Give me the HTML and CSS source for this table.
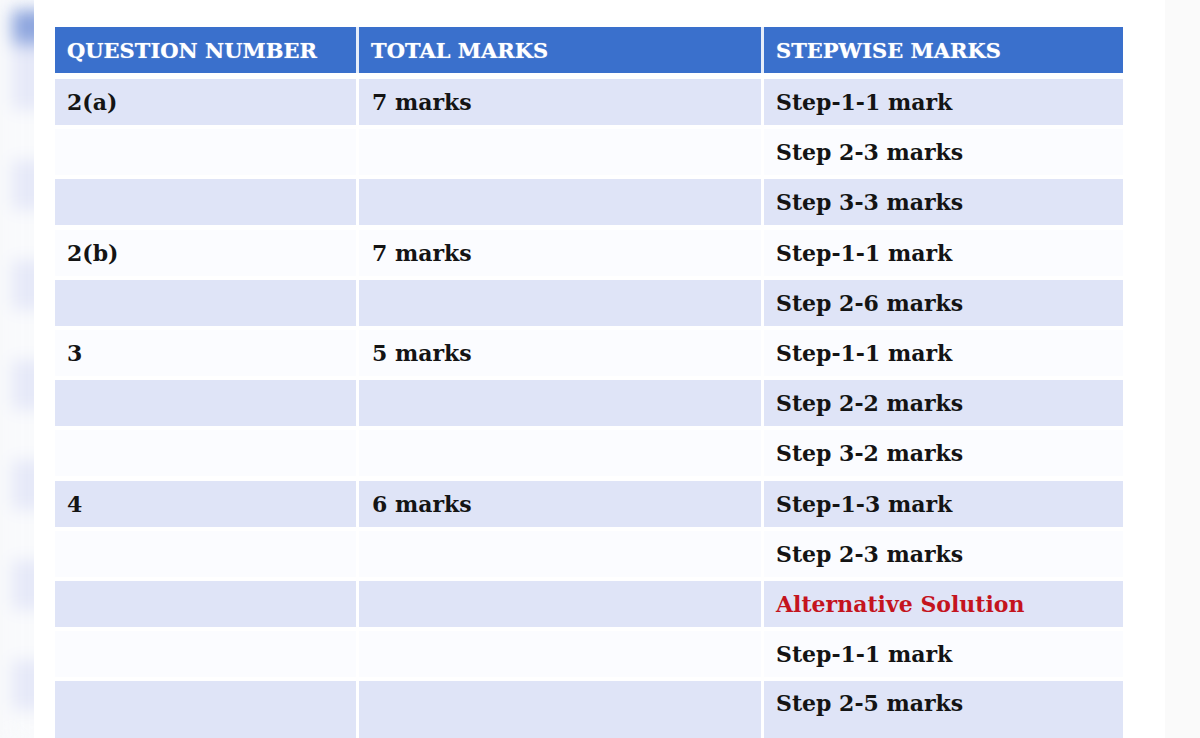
FILE: index.html
```html
<!DOCTYPE html>
<html lang="en">
<head>
<meta charset="utf-8">
<title>Stepwise Marks</title>
<link rel="stylesheet" href="styles.css">
</head>
<body>
<div class="screen">
  <div class="side"><div class="side-blur"></div></div>
  <div class="panel">
    <div class="marks">
      <div class="head">
        <div class="hcell">QUESTION NUMBER</div>
        <div class="hcell">TOTAL MARKS</div>
        <div class="hcell">STEPWISE MARKS</div>
      </div>
      <div class="body">
        <div class="row shade"><div class="cell">2(a)</div><div class="cell">7 marks</div><div class="cell">Step-1-1 mark</div></div>
        <div class="row"><div class="cell"></div><div class="cell"></div><div class="cell">Step 2-3 marks</div></div>
        <div class="row shade"><div class="cell"></div><div class="cell"></div><div class="cell">Step 3-3 marks</div></div>
        <div class="row"><div class="cell">2(b)</div><div class="cell">7 marks</div><div class="cell">Step-1-1 mark</div></div>
        <div class="row shade"><div class="cell"></div><div class="cell"></div><div class="cell">Step 2-6 marks</div></div>
        <div class="row"><div class="cell">3</div><div class="cell">5 marks</div><div class="cell">Step-1-1 mark</div></div>
        <div class="row shade"><div class="cell"></div><div class="cell"></div><div class="cell">Step 2-2 marks</div></div>
        <div class="row"><div class="cell"></div><div class="cell"></div><div class="cell">Step 3-2 marks</div></div>
        <div class="row shade"><div class="cell">4</div><div class="cell">6 marks</div><div class="cell">Step-1-3 mark</div></div>
        <div class="row"><div class="cell"></div><div class="cell"></div><div class="cell">Step 2-3 marks</div></div>
        <div class="row shade"><div class="cell"></div><div class="cell"></div><div class="cell alt">Alternative Solution</div></div>
        <div class="row"><div class="cell"></div><div class="cell"></div><div class="cell">Step-1-1 mark</div></div>
        <div class="row shade last"><div class="cell"></div><div class="cell"></div><div class="cell">Step 2-5 marks</div></div>
      </div>
    </div>
  </div>
  <div class="edge"></div>
</div>
</body>
</html>
```
FILE: styles.css
```css
html, body {
  margin: 0;
  padding: 0;
  background: #ffffff;
}

.screen {
  display: flex;
  width: 1200px;
  height: 738px;
  overflow: hidden;
}

.side {
  width: 34px;
  flex: none;
  background: #f9fafc;
  overflow: hidden;
}

.side-blur {
  width: 40px;
  height: 100%;
  margin-left: 12px;
  background:
    linear-gradient(180deg, #8ea6de 0px, #8ea6de 28px, transparent 40px),
    repeating-linear-gradient(180deg, #e6e9f8 0px, #e6e9f8 50px, #f9fafc 50px, #f9fafc 100px);
  background-position: 0 10px, 0 60px;
  background-repeat: no-repeat, repeat;
  filter: blur(8px);
}

.panel {
  width: 1131px;
  flex: none;
  background: #ffffff;
  padding: 27px 0 0 21px;
  box-sizing: border-box;
}

.edge {
  flex: 1;
  background: #fafafa;
}

.marks {
  width: 1068px;
  font-family: "DejaVu Serif", "Liberation Serif", serif;
  font-weight: bold;
}

.head,
.row {
  display: grid;
  grid-template-columns: 301px 402px 359px;
  column-gap: 3px;
}

.head {
  height: 46px;
  background: #e6edf9;
}

.hcell {
  background: #3a70cc;
  color: #ffffff;
  font-size: 21px;
  display: flex;
  align-items: center;
  padding-left: 12px;
  padding-top: 1px;
  text-shadow: 0 0 1px rgba(255,255,255,0.6);
}

.body {
  margin-top: 6px;
  display: flex;
  flex-direction: column;
  row-gap: 4.2px;
}

.row {
  height: 46px;
}

.cell {
  display: flex;
  align-items: center;
  padding-left: 12px;
  font-size: 22px;
  color: #141414;
  background: #fbfcff;
}

.cell:nth-child(2) {
  padding-left: 13px;
}

.shade .cell {
  background: #dfe4f7;
}

.last {
  height: 70px;
}

.last .cell {
  align-items: flex-start;
  padding-top: 9px;
}

.alt {
  color: #c4141e;
}
```
